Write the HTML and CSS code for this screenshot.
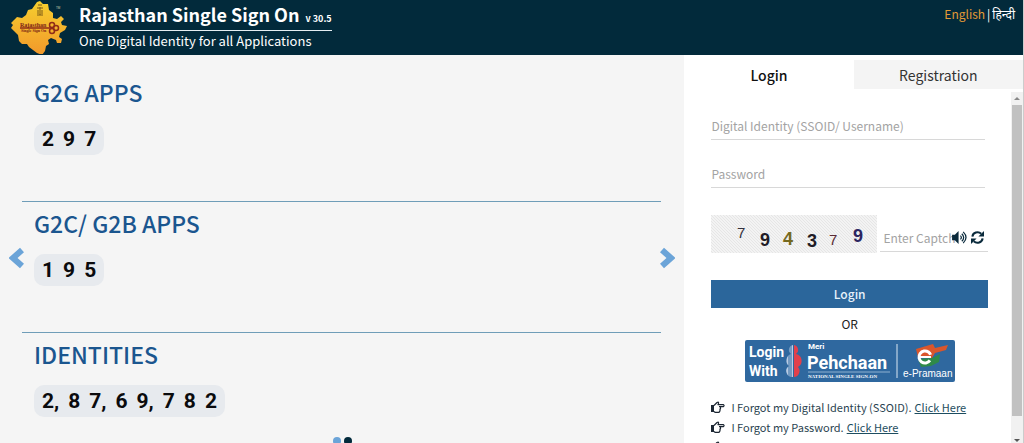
FILE: index.html
```
<!DOCTYPE html>
<html lang="en">
<head>
    <meta charset="UTF-8">
    <meta name="viewport" content="width=device-width, initial-scale=1.0">
    <title>Rajasthan Single Sign On</title>
    <link rel="stylesheet" href="styles.css">
</head>
<body>
    <header class="header">
        <svg class="logo" viewBox="0 0 60 54" aria-hidden="true">
            <defs>
                <linearGradient id="map" x1="0" y1="0" x2="0" y2="1">
                    <stop offset="0" stop-color="#f6cf2e"/>
                    <stop offset="1" stop-color="#f2982b"/>
                </linearGradient>
            </defs>
            <path fill="url(#map)" d="M27 2l3-1 3 3 5 0 1 6 4 3 0 5 4 1 4-3 3 3-3 3 1 3 5 1-2 4-5 3-1 4 3 2-1 4-4 0-1-3-5-2-3 2 1 4-3 2-1 5-3 4-5-2-4-3-4-3-2-3-5 0-3-3-1-6-4-4-3-3 2-3-2-2 3-3 3-3 5 1 4-3 2-5 4-1z"/>
            <g fill="none" stroke="#7a5a18">
                <path d="M28 5h4M27 8h6M28 10v4M30 7v8M32 10v4M27 15h6"/>
            </g>
            <g fill="none" stroke="#8f2c18" stroke-width="1.500">
                <path d="M10 28h31"/>
                <circle cx="42" cy="25" r="2.500"/>
                <circle cx="42" cy="31" r="2.500"/>
                <circle cx="46" cy="28" r="2.500"/>
            </g>
            <text class="logo-name" x="10" y="27">Rajasthan</text>
            <text class="logo-sub" x="11" y="32">Single Sign On</text>
            <text class="logo-tm" x="46" y="9">TM</text>
        </svg>
        <div class="brand">
            <h1 class="brand-name">Rajasthan Single Sign On <small>v 30.5</small></h1>
            <p class="brand-tag">One Digital Identity for all Applications</p>
        </div>
        <nav class="language">
            <a class="active" href="#">English</a><span>|</span><a href="#" lang="hi">हिन्दी</a>
        </nav>
    </header>

    <div class="content">
        <main class="slider">
            <button class="arrow prev" type="button" aria-label="Previous">
                <svg viewBox="0 0 16 22"><path d="M13 3L4 11l9 8"/></svg>
            </button>
            <div class="slide">
                <section class="stat">
                    <h2>G2G APPS</h2>
                    <div class="counter"><span>2</span><span>9</span><span>7</span></div>
                </section>
                <section class="stat">
                    <h2>G2C/ G2B APPS</h2>
                    <div class="counter"><span>1</span><span>9</span><span>5</span></div>
                </section>
                <section class="stat">
                    <h2>IDENTITIES</h2>
                    <div class="counter"><span>2,</span><span>8</span><span>7,</span><span>6</span><span>9,</span><span>7</span><span>8</span><span>2</span></div>
                </section>
            </div>
            <button class="arrow next" type="button" aria-label="Next">
                <svg viewBox="0 0 16 22"><path d="M3 3l9 8-9 8"/></svg>
            </button>
            <div class="dots"><i></i><i class="current"></i></div>
        </main>

        <aside class="panel">
            <div class="tabs">
                <button class="tab selected" type="button">Login</button>
                <button class="tab" type="button">Registration</button>
            </div>
            <div class="panel-body">
                <form class="login-form">
                    <input class="field" type="text" placeholder="Digital Identity (SSOID/ Username)" aria-label="Digital Identity (SSOID/ Username)">
                    <input class="field" type="password" placeholder="Password" aria-label="Password">
                    <div class="captcha-row">
                        <svg class="captcha" viewBox="0 0 166 38">
                            <defs>
                                <pattern id="hatch" width="3" height="3" patternUnits="userSpaceOnUse">
                                    <path d="M0 0l3 3" stroke="#e6e6e6"/>
                                </pattern>
                            </defs>
                            <rect width="166" height="38" fill="#f3f3f3"/>
                            <rect width="166" height="38" fill="url(#hatch)"/>
                            <text class="thin" x="26" y="23" fill="#33303c">7</text>
                            <text x="49" y="31" fill="#221c26">9</text>
                            <text x="72" y="30" fill="#75691f">4</text>
                            <text x="96" y="32" fill="#221c26">3</text>
                            <text class="thin" x="118" y="30" fill="#5a2b35">7</text>
                            <text x="142" y="27" fill="#2c2560">9</text>
                        </svg>
                        <div class="captcha-input">
                            <input type="text" placeholder="Enter Captcha" aria-label="Enter Captcha">
                            <button type="button" aria-label="Listen">
                                <svg viewBox="0 0 16 14">
                                    <path fill="#0a2a3c" d="M0 4h3l4-4v14l-4-4H0z"/>
                                    <path fill="none" stroke="#0a2a3c" stroke-width="1.300" d="M9 5q2 2 0 4M10.500 3q4 4 0 8M12 1q6 6 0 12"/>
                                </svg>
                            </button>
                            <button type="button" aria-label="Refresh">
                                <svg viewBox="0 0 14 14">
                                    <path fill="none" stroke="#0a2a3c" stroke-width="2.200" d="M1.500 6a5.500 5 0 0 1 9.500-3M12.500 8a5.500 5 0 0 1-9.500 3"/>
                                    <path fill="#0a2a3c" d="M14 0v6H8zM0 14V8h6z"/>
                                </svg>
                            </button>
                        </div>
                    </div>
                    <button class="submit" type="submit">Login</button>
                    <p class="or">OR</p>
                    <a class="pehchaan" href="#" aria-label="Login with Meri Pehchaan">
                        <svg viewBox="0 0 210 42">
                            <rect width="210" height="42" rx="2" fill="#2f689f"/>
                            <g fill="#fff">
                                <text class="heavy" font-size="14" x="4" y="17">Login</text>
                                <text class="heavy" font-size="14" x="4" y="36">With</text>
                                <text class="heavy" font-size="8" x="63" y="9">Meri</text>
                                <text class="heavy" font-size="18" x="62" y="29">Pehchaan</text>
                                <text class="tiny" x="63" y="38">NATIONAL SINGLE SIGN-ON</text>
                                <text class="pramaan" x="158" y="37">e-Pramaan</text>
                            </g>
                            <path d="M63 32h82" stroke="#8fb0d0"/>
                            <path d="M152 4v34" stroke="#dbe7f2"/>
                            <path fill="#b9cce4" d="M48 5a5 5 0 0 0-2 9 7 7 0 0 0-2 12 6 6 0 0 0 4 11z"/>
                            <path stroke="#2f689f" d="M46 4v34M44 4v34"/>
                            <path fill="#e2404b" d="M49 5a5 5 0 0 1 2 9 7 7 0 0 1 2 13 6 6 0 0 1-4 10z"/>
                            <path fill="#d9562c" d="M171 9l17-5 2 4 13-3-2 5-11 3-3 5-14-1z"/>
                            <path fill="#2f8a48" d="M173 19l14-1 8-4-1 8-8 4-10 1z"/>
                            <circle cx="180" cy="17" r="6" fill="none" stroke="#fff" stroke-width="3" stroke-dasharray="31 7" transform="rotate(35 180 17)"/>
                            <path stroke="#fff" stroke-width="2" d="M175 17h11"/>
                        </svg>
                    </a>
                    <ul class="help">
                        <li><svg class="hand" viewBox="0 0 14 12"><use href="#hand"/></svg>I Forgot my Digital Identity (SSOID). <a href="#">Click Here</a></li>
                        <li><svg class="hand" viewBox="0 0 14 12"><use href="#hand"/></svg>I Forgot my Password. <a href="#">Click Here</a></li>
                        <li><svg class="hand" viewBox="0 0 14 12"><use href="#hand"/></svg></li>
                    </ul>
                </form>
                <div class="scrollbar"><i class="up"></i><i class="thumb"></i><i class="down"></i></div>
            </div>
        </aside>
    </div>

    <svg class="symbols" aria-hidden="true">
        <symbol id="hand" viewBox="0 0 14 12">
            <path fill="#1c2733" d="M0 4h3v7H0z"/>
            <path fill="none" stroke="#1c2733" stroke-width="1.200" stroke-linejoin="round" d="M3 4.500l3-3q2-1 1.500 1L7 3.600h5.500q1.200 1 0 2H9.500v2.200H9v2L8 11.300H4L3 10.500M9.500 5.600H8"/>
        </symbol>
    </svg>
</body>
</html>
```
FILE: styles.css
```
*{
    box-sizing: border-box;
    margin: 0;
    padding: 0;
}
body{
    display: flex;
    flex-direction: column;
    height: 100vh;
    overflow: hidden;
    border-right: 1px solid #ccc;
    background-color: #fff;
    color: #222;
    font-family: "Noto Sans CJK SC", "Noto Sans", sans-serif;
    font-size: 12px;
}
button, input{
    font: inherit;
    border: 0;
    background: none;
    outline: 0;
}
button{
    cursor: pointer;
}
svg{
    display: block;
}
.symbols{
    display: none;
}

/* header */
.header{
    display: flex;
    flex: none;
    height: 55px;
    padding: 0 8px 0 10px;
    background-color: #022a3b;
    color: #fff;
}
.logo{
    width: 60px;
    height: 54px;
    margin-right: 9px;
}
.logo-name{
    font: bold 6px "Liberation Serif", serif;
    fill: #7d1f16;
}
.logo-sub{
    font: bold 4px "Liberation Serif", serif;
    fill: #7d1f16;
}
.logo-tm{
    font: 3px "Liberation Sans", sans-serif;
    fill: #c9d3b0;
}
.brand-name{
    height: 31px;
    border-bottom: 1px solid #e5eef2;
    font-size: 18px;
    font-weight: 700;
    line-height: 29px;
}
.brand-name small{
    margin-left: 2px;
    font-size: 9px;
}
.brand-tag{
    font-size: 13px;
    line-height: 20px;
}
.language{
    display: flex;
    gap: 2px;
    margin-left: auto;
    line-height: 28px;
}
.language a{
    color: #fff;
    text-decoration: none;
}
.language .active{
    color: #e39a35;
}

.content{
    display: flex;
    flex: 1;
    min-height: 0;
}

/* app counters */
.slider{
    position: relative;
    flex: 0 0 66.9%;
    background-color: #f5f5f5;
}
.slide{
    padding: 16px 23px 0 22px;
}
.stat{
    height: 131px;
    padding-left: 12px;
    border-bottom: 1px solid #6f9db8;
}
.stat:last-child{
    border-bottom: 0;
}
.stat h2{
    color: #1b568f;
    font-size: 23px;
    font-weight: 500;
    line-height: 42px;
}
.counter{
    display: inline-flex;
    gap: 9px;
    height: 32px;
    margin-top: 10px;
    padding: 0 8px;
    border-radius: 10px;
    background-color: #e7eaee;
    color: #0b0b0d;
    font-family: Roboto, "Liberation Sans", sans-serif;
    font-size: 21px;
    font-weight: 700;
    line-height: 32px;
}
.arrow{
    position: absolute;
    top: 192px;
}
.arrow svg{
    width: 16px;
    height: 22px;
    fill: none;
    stroke: #6ba4d8;
    stroke-width: 6;
}
.prev{
    left: 9px;
}
.next{
    right: 9px;
}
.dots{
    position: absolute;
    bottom: -2px;
    left: 0;
    right: 0;
    display: flex;
    justify-content: center;
    gap: 3px;
}
.dots i{
    width: 8px;
    height: 8px;
    border-radius: 50%;
    background-color: #6ba4d8;
}
.dots .current{
    background-color: #022a3b;
}

/* login panel */
.panel{
    display: flex;
    flex: 1;
    flex-direction: column;
    min-width: 0;
}
.tabs{
    display: flex;
    padding-top: 5px;
    margin-bottom: 3px;
}
.tab{
    flex: 1;
    height: 29px;
    background-color: #f4f4f4;
    color: #333;
    font-size: 14px;
    line-height: 26px;
}
.selected{
    background-color: #fff;
    color: #111;
    font-weight: 500;
}
.panel-body{
    display: flex;
    flex: 1;
    gap: 23px;
    min-height: 0;
}
.login-form{
    flex: 1;
    min-width: 0;
    padding: 20px 0 0 27px;
}
.field{
    display: block;
    width: calc(100% - 3px);
    height: 28px;
    margin-bottom: 20px;
    border-bottom: 1px solid #d8d8d8;
}
input::placeholder{
    color: #a3a3a3;
    opacity: 1;
}
.captcha-row{
    display: flex;
    gap: 3px;
    margin-top: 27px;
}
.captcha{
    width: 166px;
    height: 38px;
    font: bold 18px "Liberation Sans", sans-serif;
}
.captcha .thin{
    font-size: 15px;
    font-weight: 400;
}
.captcha-input{
    display: flex;
    flex: 1;
    align-items: center;
    min-width: 0;
    height: 37px;
    padding: 9px 3px 0 3px;
    border-bottom: 1px solid #d8d8d8;
}
.captcha-input input{
    flex: 1;
    min-width: 0;
    margin-right: -4px;
}
.captcha-input button + button{
    margin-left: 3px;
}
.captcha-input svg{
    width: 15px;
    height: 13px;
}
.submit{
    display: block;
    width: 100%;
    height: 28px;
    margin-top: 27px;
    background-color: #2b669b;
    color: #e6f1fa;
    font-weight: 500;
    line-height: 28px;
}
.or{
    line-height: 32px;
    text-align: center;
}
.pehchaan svg{
    width: 210px;
    height: 42px;
    margin: 0 auto;
}
.heavy{
    font-family: Roboto, "Liberation Sans", sans-serif;
    font-weight: 700;
}
.tiny{
    font: bold 5px "Liberation Serif", serif;
}
.pramaan{
    font: 10px "Liberation Sans", sans-serif;
}
.help{
    margin-top: 15px;
    list-style: none;
    color: #2a4350;
    font-size: 11px;
    line-height: 20px;
}
.help li{
    display: flex;
    gap: 3px;
    align-items: center;
    height: 20px;
}
.help a{
    color: #1d4d60;
}
.hand{
    width: 14px;
    height: 12px;
    margin-right: 3px;
}

.scrollbar{
    display: flex;
    flex-direction: column;
    align-items: center;
    width: 12px;
    background-color: #f1f1f1;
}
.up{
    margin: 5px 0;
    border: 3px solid transparent;
    border-top: 0;
    border-bottom-color: #888;
}
.thumb{
    width: 10px;
    height: 311px;
    background-color: #c1c1c1;
}
.down{
    margin-top: auto;
    margin-bottom: 1px;
    border: 3px solid transparent;
    border-bottom: 0;
    border-top-color: #555;
}
```
